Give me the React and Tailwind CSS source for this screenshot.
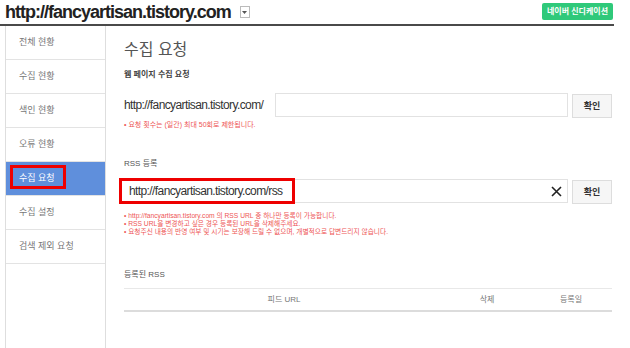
import { useState } from 'react';

const menu = ['전체 현황', '수집 현황', '색인 현황', '오류 현황', '수집 요청', '수집 설정', '검색 제외 요청'];

const kr = "font-['Liberation_Sans','Noto_Sans_CJK_KR',sans-serif]";

function Sidebar() {
  return (
    <div className="ml-[5px] w-[101px] shrink-0 border-x border-[#dedede] bg-white">
      {menu.map((item) => {
        const active = item === '수집 요청';
        return (
          <div
            key={item}
            className={`relative flex h-[34px] items-center border-b border-[#e3e3e3] pl-[13px] text-[9px] ${
              active ? 'bg-[#5f8fdc] text-white' : 'text-[#777]'
            }`}
          >
            {item}
            {active && (
              <div className="absolute left-[4px] top-[3px] h-[24px] w-[56px] border-[3px] border-[#ee0000]" />
            )}
          </div>
        );
      })}
    </div>
  );
}

function ConfirmButton() {
  return (
    <button className="h-[24px] w-[40px] shrink-0 border border-[#ddd] bg-[#f6f6f6] text-[9px] font-bold text-[#333]">
      확인
    </button>
  );
}

export default function App() {
  const [rss, setRss] = useState('http://fancyartisan.tistory.com/rss');

  return (
    <div className={`h-[348px] w-[630px] overflow-hidden bg-white ${kr}`}>
      {/* top bar */}
      <div className="flex h-[26px] w-[614px] items-center border-b-2 border-[#4a4a4a] pl-[5px]">
        <h1 className="text-[18px] font-bold leading-[22px] tracking-[-1px] text-[#222]">
          http://fancyartisan.tistory.com
        </h1>
        <span className="ml-[9px] flex h-[12px] w-[10px] items-center justify-center border border-[#bbb] bg-white">
          <svg width="5" height="3" viewBox="0 0 5 3">
            <path d="M0 0h5L2.5 3z" fill="#555" />
          </svg>
        </span>
        <button className="ml-auto mr-[1px] mt-[3px] h-[17px] w-[71px] self-start rounded-[2px] bg-[#2fc97a] text-[8px] font-bold text-white">
          네이버 신디케이션
        </button>
      </div>

      <div className="flex h-[322px]">
        <Sidebar />

        <div className="flex-1 pl-[18px] pr-[18px] pt-[14px]">
          <h2 className="text-[16px] leading-[20px] text-[#555]">수집 요청</h2>
          <p className="mt-[9px] text-[8px] font-bold text-[#444]">웹 페이지 수집 요청</p>

          <div className="mt-[12px] flex h-[24px] items-center">
            <span className="w-[151px] text-[12px] tracking-[-0.6px] text-[#333]">
              http://fancyartisan.tistory.com/
            </span>
            <input className="h-[24px] flex-1 border border-[#e2e2e2] outline-none" />
            <div className="ml-[4px]">
              <ConfirmButton />
            </div>
          </div>
          <p className="mt-[2px] text-[7px] leading-[12px] text-[#ee5555]">• 요청 횟수는 (일간) 최대 50회로 제한됩니다.</p>

          <p className="mt-[27px] text-[8px] text-[#555]">RSS 등록</p>

          <div className="relative mt-[9px] -ml-[5px] flex h-[24px] items-center">
            <div className="relative flex h-[24px] flex-1 items-center border border-[#e2e2e2]">
              <input
                value={rss}
                onChange={(e) => setRss(e.target.value)}
                className="h-full flex-1 bg-transparent pl-[9px] text-[12px] tracking-[-0.6px] text-[#333] outline-none"
              />
              <svg width="11" height="11" viewBox="0 0 11 11" className="mr-[5px]">
                <path d="M1 1l9 9M10 1l-9 9" stroke="#222" strokeWidth="1.6" />
              </svg>
            </div>
            <div className="ml-[4px]">
              <ConfirmButton />
            </div>
            <div className="pointer-events-none absolute left-[0px] top-[-1px] h-[26px] w-[176px] border-[3px] border-[#ee0000]" />
          </div>

          <ul className="mt-[9px] text-[6.7px] leading-[8px] text-[#ee5555]">
            <li>• http://fancyartisan.tistory.com 의 RSS URL 중 하나만 등록이 가능합니다.</li>
            <li>• RSS URL을 변경하고 싶은 경우 등록된 URL을 삭제해주세요.</li>
            <li>• 요청주신 내용의 반영 여부 및 시기는 보장해 드릴 수 없으며, 개별적으로 답변드리지 않습니다.</li>
          </ul>

          <p className="mt-[33px] text-[8px] text-[#555]">등록된 RSS</p>

          <div className="mt-[7px] flex h-[24px] items-center border-t border-b-2 border-t-[#e8e8e8] border-b-[#dcdcdc] text-[8px] text-[#777]">
            <span className="w-[320px] text-center">피드 URL</span>
            <span className="w-[86px] text-center">삭제</span>
            <span className="flex-1 text-center">등록일</span>
          </div>
        </div>
      </div>
    </div>
  );
}
